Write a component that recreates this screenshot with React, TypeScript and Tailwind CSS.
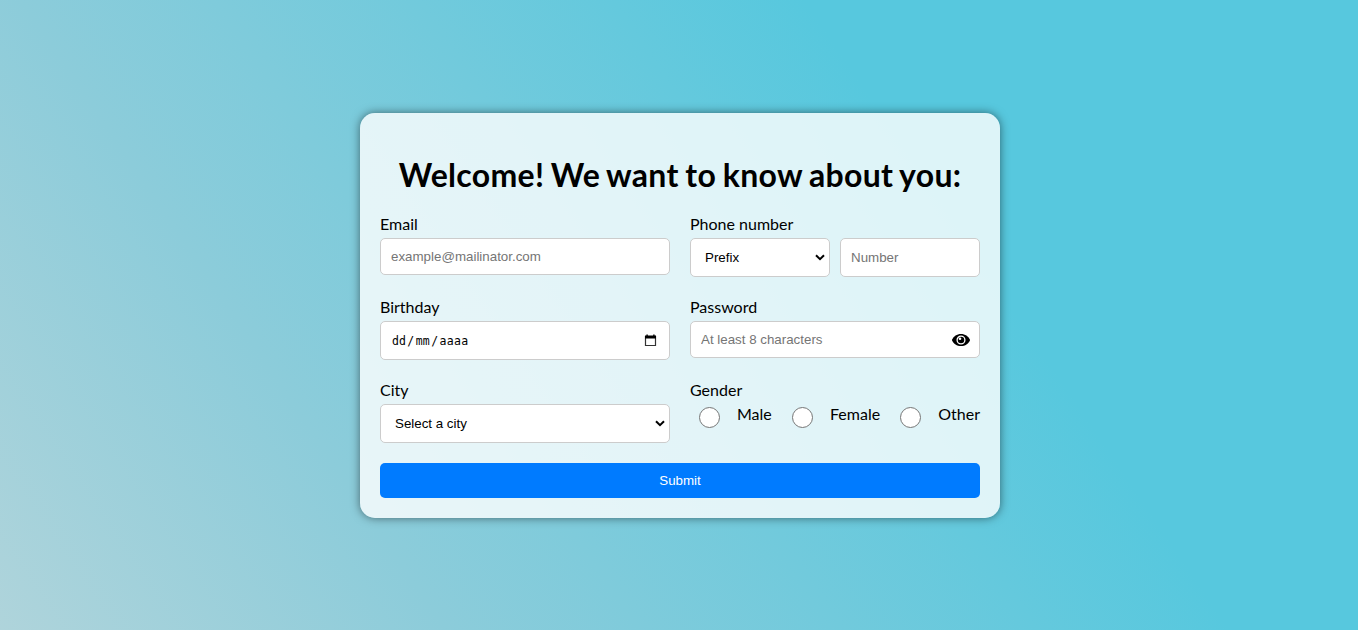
import type { ReactNode } from 'react';

const control =
  "w-full rounded-[5px] border border-[#ccc] bg-white p-[10px] font-['Liberation_Sans',sans-serif] text-[13.333px] leading-[15px] text-black placeholder:text-[#757575]";

function Field({ label, children }: { label: string; children: ReactNode }) {
  return (
    <div className="flex h-[63px] flex-col">
      <span className="mb-[5px] block h-[19px] leading-[19px]">{label}</span>
      {children}
    </div>
  );
}

function Select({ text }: { text: string }) {
  return (
    <div className={`${control} flex h-[39px] items-center justify-between pr-[4px] pl-[14px]`}>
      <span>{text}</span>
      <svg width="10" height="7" viewBox="0 0 10 7" fill="none" stroke="#000" strokeWidth="2">
        <path d="M1 1.2 5 5.2 9 1.2" />
      </svg>
    </div>
  );
}

function Radio({ label }: { label: string }) {
  return (
    <label className="flex h-6 items-start">
      <input
        type="radio"
        name="gender"
        className="mt-[3px] mr-[17px] h-[21px] w-[21px] appearance-none rounded-full border border-[#767676] bg-white"
      />
      <span className="leading-[19px]">{label}</span>
    </label>
  );
}

function EyeIcon({ className }: { className: string }) {
  return (
    <svg className={className} width="18" height="12" viewBox="0 0 18 12">
      <path d="M9 0C4.8 0 1.6 2.4.1 5.6a1 1 0 0 0 0 .8C1.6 9.600 4.800 12 9 12s7.400-2.400 8.900-5.600a1 1 0 0 0 0-.8C16.400 2.400 13.200 0 9 0z" fill="#000" />
      <circle cx="9" cy="6" r="3.900" fill="none" stroke="#fff" strokeWidth="1.300" />
      <circle cx="8" cy="4.800" r="1.300" fill="#fff" />
    </svg>
  );
}

export default function App() {
  return (
    <main className="flex h-[630px] items-start justify-center bg-[linear-gradient(56deg,#afd4db_0%,#8cccda_25%,#57c8de_69%,#57c8de_100%)] pt-[113px] pl-[2px] font-['Lato',sans-serif] text-base text-black">
      <form className="h-[405px] w-[640px] rounded-[15px] bg-white/80 px-5 pt-[42px] shadow-[0_0_10px_rgba(0,0,0,0.5)]">
        <h1 className="mb-[20px] h-[39px] text-center text-[32px] leading-[39px] font-bold tracking-[0.3px] whitespace-nowrap [word-spacing:-1.4px]">
          Welcome! We want to know about you:
        </h1>
        <div className="grid grid-cols-2 gap-5">
          <Field label="Email">
            <input className={`${control} h-[37px]`} placeholder="example@mailinator.com" />
          </Field>
          <Field label="Phone number">
            <div className="grid grid-cols-2 gap-[10px]">
              <Select text="Prefix" />
              <input className={`${control} h-[39px]`} placeholder="Number" />
            </div>
          </Field>
          <Field label="Birthday">
            <div className={`${control} flex h-[39px] items-center justify-between pr-[12px]`}>
              <div className="flex pt-[2px] font-['DejaVu_Sans_Mono',monospace] text-[11.5px]">
                <span className="pr-[1.5px] pl-px">dd</span>
                <span>/</span>
                <span className="px-[1.5px]">mm</span>
                <span>/</span>
                <span className="px-[1.5px] tracking-[0.3px]">aaaa</span>
              </div>
              <svg width="13" height="13" viewBox="0 0 13 13">
                <path d="M1.5 2.5h10v9h-10z" fill="none" stroke="#333" strokeWidth="1.2" />
                <path d="M1 1.6h1.4V.5h1.4v1.1h5.4V.5h1.4v1.1H12v3H1z" fill="#000" />
              </svg>
            </div>
          </Field>
          <Field label="Password">
            <div className="relative">
              <input className={`${control} block h-[37px]`} placeholder="At least 8 characters" />
              <EyeIcon className="absolute top-[13px] right-[10px]" />
            </div>
          </Field>
          <Field label="City">
            <Select text="Select a city" />
          </Field>
          <Field label="Gender">
            <div className="flex justify-between pl-[9px]">
              <Radio label="Male" />
              <Radio label="Female" />
              <Radio label="Other" />
            </div>
          </Field>
        </div>
        <button
          type="button"
          className="mt-5 block h-[35px] w-full rounded-[5px] bg-[#007bff] font-['Liberation_Sans',sans-serif] text-[13.333px] leading-[15px] text-white"
        >
          Submit
        </button>
      </form>
    </main>
  );
}
